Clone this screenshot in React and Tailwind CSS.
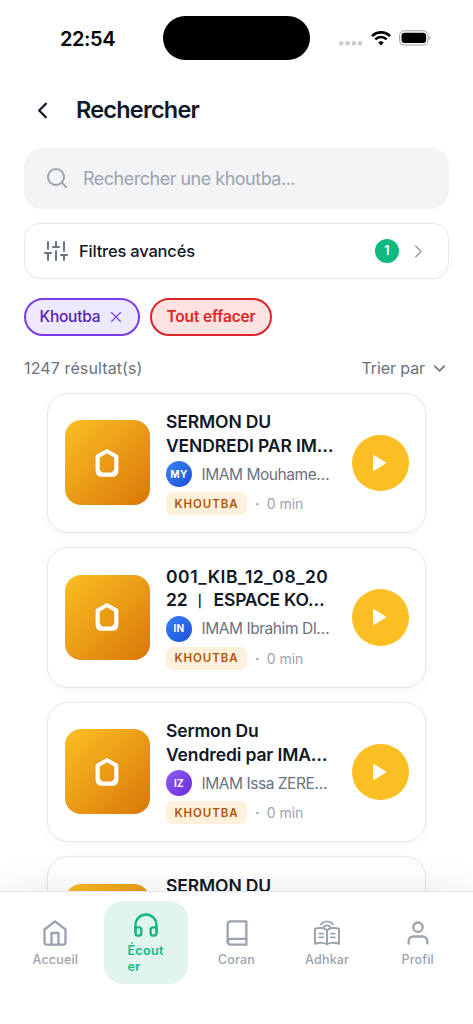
import {
  FiBook,
  FiChevronDown,
  FiChevronLeft,
  FiChevronRight,
  FiHeadphones,
  FiHome,
  FiSearch,
  FiSliders,
  FiUser,
  FiX,
} from "react-icons/fi";

const BLUE = "from-[#3b82f6] to-[#1d4ed8]";
const PURPLE = "from-[#8b5cf6] to-[#6d28d9]";

const sermons = [
  { id: 1, line1: "SERMON DU", line2: "VENDREDI PAR IM…", initials: "MY", imam: "IMAM Mouhame…", avatar: BLUE },
  {
    id: 2,
    line1: <span className="tracking-[0.55px]">001_KIB_12_08_20</span>,
    line2: (
      <>
        22<span className="mx-[2px] inline-block w-[20px] text-center text-[14px] font-bold leading-none [-webkit-text-stroke:0.6px_#111827]">｜</span>
        <span className="ml-[2px] tracking-[-0.2px]">ESPACE KO…</span>
      </>
    ),
    initials: "IN",
    imam: "IMAM Ibrahim DI…",
    avatar: BLUE,
  },
  { id: 3, line1: "Sermon Du", line2: "Vendredi par IMA…", initials: "IZ", imam: "IMAM Issa ZERE…", avatar: PURPLE },
  { id: 4, line1: "SERMON DU", line2: "VENDREDI PAR IM…", initials: "MY", imam: "IMAM Mouhame…", avatar: BLUE },
];

function AdhkarIcon() {
  return (
    <svg width="28" height="28" viewBox="0 0 28 28" fill="none" stroke="currentColor" strokeWidth="2" strokeLinecap="round" strokeLinejoin="round">
      <path d="M14 11.2C11.5 8.900 6 8.400 2 9.600v15.200c4-1.400 9.500-1.200 12 .4 2.500-1.600 8-1.800 12-.4V9.600c-4-1.200-9.500-.7-12 1.600z" />
      <path d="M14 11.200v14" />
      <path d="M6.200 14.600h4M6.200 18.400h4M17.800 14.600h4M17.800 18.400h4" strokeWidth="1.700" />
      <path d="M7.800 5.400c3.200-3.900 9.200-3.900 12.400 0" strokeWidth="1.600" />
      <path d="M10.400 8.400c1.600-2.600 5.600-2.600 7.200 0" strokeWidth="1.800" />
    </svg>
  );
}

function StatusBar() {
  return (
    <div className="flex h-[76px] items-center pl-[60px] pr-[42px] text-black">
      <span className="w-[103px] pt-px text-[20px] font-semibold tracking-[-0.4px]">22:54</span>
      <div className="h-[43.500px] w-[147px] rounded-full bg-black" />
      <div className="ml-auto flex w-[92px] items-center">
        <svg width="24" height="16" viewBox="0 0 24 16" fill="#cbcbcb">
          <circle cx="2.200" cy="13.300" r="2.200" />
          <circle cx="8.500" cy="13.300" r="2.200" />
          <circle cx="14.800" cy="13.300" r="2.200" />
          <circle cx="21.100" cy="13.300" r="2.200" />
        </svg>
        <svg className="ml-2" width="20" height="16" viewBox="0 0 20 16" fill="none" stroke="#000" strokeWidth="2.600">
          <path d="M1 6.100a12.700 12.700 0 0 1 18 0" />
          <path d="M4.300 9.400a8 8 0 0 1 11.400 0" />
          <path d="M10 15.500l-2.800-2.900a4 4 0 0 1 5.600 0z" fill="#000" stroke="none" />
        </svg>
        <svg className="ml-2 shrink-0" width="32" height="16" viewBox="0 0 32 16">
          <rect x=".6" y=".8" width="28.400" height="14.200" rx="4.600" fill="none" stroke="#999" />
          <rect x="2.500" y="2.700" width="24.600" height="10.400" rx="3" />
          <path d="M30.300 5.800c1.600.6 1.600 3.600 0 4.200z" fill="#999" />
        </svg>
      </div>
    </div>
  );
}

function SermonCard({ sermon }) {
  return (
    <div className="flex h-[140.500px] shrink-0 items-center rounded-[21px] border border-[#e5e7eb] bg-white px-[17px] shadow-[0_2px_10px_rgba(0,0,0,0.04)]">
      <div className="flex size-[85px] shrink-0 items-center justify-center rounded-[16px] bg-linear-to-br from-[#fbbf24] to-[#d97706]">
        <svg className="-ml-px" width="24" height="28" viewBox="0 0 24 28" fill="#fff">
          <path
            fillRule="evenodd"
            d="M12 0 22.500 5.800Q23.400 6.300 23.400 7.400V21.500Q23.400 27.800 17.100 27.800H6.900Q.6 27.800.6 21.500V7.400Q.6 6.300 1.500 5.800zM12 4.300 4.800 8.600V20.800L7.300 23.500H16.700L19.200 20.800V8.600z"
          />
        </svg>
      </div>
      <div className="ml-4 w-[186px] shrink-0 whitespace-nowrap">
        <div className="text-[17.500px] font-semibold leading-[23.500px] tracking-[-0.12px] text-[#111827]">
          <p>{sermon.line1}</p>
          <p>{sermon.line2}</p>
        </div>
        <div className="mt-1 flex items-center">
          <span className={`flex size-[26px] items-center justify-center rounded-full bg-linear-to-br text-[10px] font-bold tracking-[0.4px] text-white ${sermon.avatar}`}>
            {sermon.initials}
          </span>
          <span className="ml-[9.500px] text-[15.500px] tracking-[-0.45px] text-[#6b7280]">{sermon.imam}</span>
        </div>
        <div className="mt-[5px] flex h-[23px] items-center">
          <span className="flex h-[23px] w-[81px] items-center justify-center rounded-[7px] bg-[#fef0db] pt-px text-[11.500px] font-semibold tracking-[0.9px] text-[#b45309]">
            KHOUTBA
          </span>
          <span className="ml-2 text-[14px] font-bold text-[#9ca3af]">·</span>
          <span className="ml-[7px] text-[14px] text-[#9ca3af]">0 min</span>
        </div>
      </div>
      <button className="flex size-[56.500px] shrink-0 items-center justify-center rounded-full bg-[#fbbf24]">
        <svg width="14" height="18" viewBox="0 0 14 18" fill="#fff">
          <path d="M0 .4 13.700 9 0 17.600z" />
        </svg>
      </button>
    </div>
  );
}

function NavItem({ icon, label }) {
  return (
    <button className="flex w-[90.600px] flex-col items-center pt-[27px] text-[#9ca3af]">
      {icon}
      <span className="mt-[4px] text-[12.500px] font-medium leading-[18px] tracking-[0.2px]">{label}</span>
    </button>
  );
}

export default function App() {
  return (
    <div className="flex h-[1024px] w-[473px] flex-col overflow-hidden bg-white font-['Inter','Noto_Sans_CJK_SC',sans-serif]">
      <StatusBar />

      {/* Header */}
      <header className="flex h-[72px] items-center pb-1 pl-[29px]">
        <FiChevronLeft size={27} className="text-[#111827]" />
        <h1 className="ml-5 text-[23.500px] font-semibold tracking-[-0.8px] text-[#111827]">Rechercher</h1>
      </header>

      <div className="px-6">
        <div className="flex h-[60.500px] items-center rounded-[18px] bg-[#f3f4f6] pl-[21px] text-[#9ca3af]">
          <FiSearch size={24} />
          <span className="ml-3.5 text-[18px] tracking-[-0.5px]">Rechercher une khoutba...</span>
        </div>

        <button className="mt-[14.500px] flex h-[56px] w-full items-center rounded-[16px] border border-[#e5e7eb] px-[19px]">
          <FiSliders size={24} className="text-[#6b7280]" />
          <span className="ml-[11px] text-[16.500px] font-medium tracking-[-0.2px] text-[#111827]">Filtres avancés</span>
          <span className="ml-auto flex size-[24px] items-center justify-center rounded-full bg-[#10b981] text-[12.500px] font-semibold text-white">1</span>
          <FiChevronRight size={21} className="ml-[9px] text-[#9ca3af]" />
        </button>

        {/* Active filters */}
        <div className="mt-[18.500px] flex gap-[10px]">
          <button className="flex h-[38px] w-[116px] items-center rounded-full border-2 border-[#7c3aed] bg-[#ede9fe] pl-[13.500px] text-[15.500px] font-medium tracking-[-0.25px] text-[#5b21b6]">
            Khoutba
            <FiX size={18} strokeWidth={1.500} className="ml-[7px] text-[#7c3aed]" />
          </button>
          <button className="flex h-[38px] w-[122px] items-center justify-center rounded-full border-2 border-[#dc2626] bg-[#fee2e2] text-[15.500px] font-semibold tracking-[-0.15px] text-[#dc2626]">
            Tout effacer
          </button>
        </div>

        <div className="mt-[20px] flex h-[24px] items-center justify-between pt-px text-[16px] text-[#6b7280]">
          <span className="tracking-[0.12px]">1247 résultat(s)</span>
          <span className="flex items-center gap-[5px] tracking-[-0.1px]">
            Trier par
            <FiChevronDown size={19} />
          </span>
        </div>
      </div>

      {/* Results */}
      <div className="mt-3 flex min-h-0 flex-1 flex-col gap-[14px] overflow-hidden px-[47px] pt-px">
        {sermons.map((s) => (
          <SermonCard key={s.id} sermon={s} />
        ))}
      </div>

      {/* Tab bar */}
      <nav className="relative flex h-[133px] shrink-0 justify-center border-t border-[#e5e7eb] bg-white shadow-[0_-9px_32px_rgba(0,0,0,0.06)]">
        <NavItem icon={<FiHome size={28} />} label="Accueil" />
        <div className="w-[90.600px] px-[3.500px] pt-[9px]">
          <button className="flex h-[83px] w-full flex-col items-center rounded-[19px] bg-[#e1f5ee] pt-[10px] text-[#10b981]">
            <FiHeadphones size={28} />
            <span className="mt-[4px] w-[37px] text-left text-[12.500px] font-semibold leading-[15.500px] tracking-[0.4px]">
              Écout
              <br />
              er
            </span>
          </button>
        </div>
        <NavItem icon={<FiBook size={28} />} label="Coran" />
        <NavItem icon={<AdhkarIcon />} label="Adhkar" />
        <NavItem icon={<FiUser size={28} />} label="Profil" />
      </nav>
    </div>
  );
}
